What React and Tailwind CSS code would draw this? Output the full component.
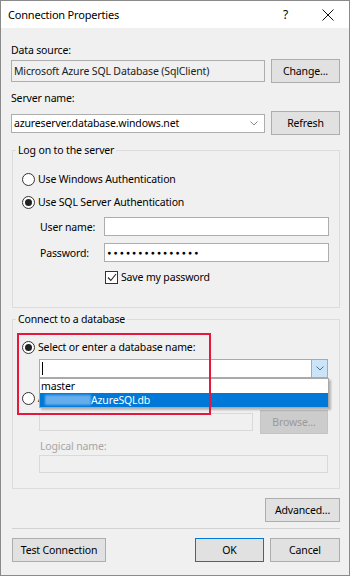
import React from "react";

const Radio = ({ checked }) => (
  <span className="w-[13px] h-[13px] shrink-0 rounded-full border border-[#333] bg-white flex items-center justify-center">
    {checked && <span className="w-[7px] h-[7px] rounded-full bg-[#222]" />}
  </span>
);

const Btn = ({ children, className = "", disabled, primary }) => (
  <div
    className={`h-[24px] shrink-0 flex items-center justify-center border ${
      primary ? "border-[#0078d7]" : disabled ? "border-[#c4c4c4]" : "border-[#adadad]"
    } ${disabled ? "bg-[#cccccc] text-[#9a9a9a]" : "bg-[#e1e1e1] text-black"} ${className}`}
  >
    {children}
  </div>
);

const Chevron = ({ color = "#606060" }) => (
  <svg width="8" height="5" viewBox="0 0 8 5">
    <polyline points="0.5,0.5 4,4 7.5,0.5" fill="none" stroke={color} strokeWidth="1" />
  </svg>
);

export default function App() {
  const dots = Array.from({ length: 15 });
  return (
    <div className="w-[350px] h-[576px] border border-[#8a8a8a] bg-[#f0f0f0] flex flex-col text-[10.5px] tracking-[-0.15px] leading-[16px] text-black font-['Noto_Sans',sans-serif] overflow-hidden whitespace-nowrap">
      {/* Title bar */}
      <div className="h-[27px] bg-white flex items-center pl-[7px] shrink-0">
        <span className="text-[11px] tracking-[-0.2px]">Connection Properties</span>
        <span className="ml-auto mr-[34px] text-[12px]">?</span>
        <svg width="12" height="12" viewBox="0 0 12 12" className="mr-[15px]">
          <path d="M0.5 0.5 L11.5 11.5 M11.5 0.5 L0.5 11.5" stroke="#111" strokeWidth="1" />
        </svg>
      </div>

      {/* Body */}
      <div className="flex flex-col pl-[10px] pr-[9px]">
        <div className="mt-[14px]">Data source:</div>
        <div className="mt-[1px] h-[24px] flex items-center gap-[6px]">
          <div className="w-[254px] h-[22px] border border-[#adadad] bg-[#f0f0f0] flex items-center pl-[2px] text-[#222]">
            Microsoft Azure SQL Database (SqlClient)
          </div>
          <Btn className="w-[69px]">Change...</Btn>
        </div>

        <div className="mt-[7px]">Server name:</div>
        <div className="mt-[5px] h-[24px] flex items-center gap-[6px]">
          <div className="w-[254px] h-[19px] border border-[#adadad] bg-white flex items-center pl-[2px] pr-[6px]">
            <span>azureserver.database.windows.net</span>
            <span className="ml-auto">
              <Chevron color="#8a8a8a" />
            </span>
          </div>
          <Btn className="w-[69px]">Refresh</Btn>
        </div>

        {/* Log on to the server */}
        <fieldset className="mt-[8px] ml-[1px] w-[328px] h-[165px] border border-[#dcdcdc]">
          <legend className="ml-[3px] px-[2px] leading-[14px]">Log on to the server</legend>
          <div className="flex flex-col pl-[9px]">
            <div className="mt-[14px] h-[16px] flex items-center gap-[3px]">
              <Radio />
              <span>Use Windows Authentication</span>
            </div>
            <div className="mt-[7px] h-[16px] flex items-center gap-[3px]">
              <Radio checked />
              <span>Use SQL Server Authentication</span>
            </div>
            <div className="mt-[7px] h-[19px] flex items-center pl-[18px]">
              <span className="w-[64px] shrink-0">User name:</span>
              <div className="w-[225px] h-[19px] border border-[#adadad] bg-white" />
            </div>
            <div className="mt-[7px] h-[19px] flex items-center pl-[18px]">
              <span className="w-[64px] shrink-0">Password:</span>
              <div className="w-[225px] h-[19px] border border-[#adadad] bg-white flex items-center pl-[2px]">
                <div className="w-[92px] flex justify-between text-[6.5px] leading-[8px] tracking-normal">
                  {dots.map((_, i) => (
                    <span key={i} className="w-[5px] flex justify-center">●</span>
                  ))}
                </div>
              </div>
            </div>
            <div className="mt-[7px] h-[16px] flex items-center gap-[3px] pl-[83px]">
              <span className="w-[13px] h-[13px] border border-[#333] bg-white flex items-center justify-center">
                <svg width="10" height="9" viewBox="0 0 10 9">
                  <polyline points="1,4.5 3.8,7.5 9,1" fill="none" stroke="#222" strokeWidth="1.1" />
                </svg>
              </span>
              <span>Save my password</span>
            </div>
          </div>
        </fieldset>

        {/* Connect to a database */}
        <div className="relative mt-[4px] ml-[1px] w-[328px]">
          <fieldset className="w-[328px] h-[177px] border border-[#dcdcdc]">
            <legend className="ml-[3px] px-[2px] leading-[14px]">Connect to a database</legend>
            <div className="flex flex-col pl-[9px]">
              <div className="mt-[13px] h-[16px] flex items-center gap-[3px]">
                <Radio checked />
                <span>Select or enter a database name:</span>
              </div>
              <div className="relative mt-[4px] ml-[17px] w-[289px] h-[19px] border border-[#7eb4ea] bg-white flex items-center">
                <span className="ml-[2px] w-px h-[13px] bg-black" />
                <span className="ml-auto w-[16px] h-full bg-[#cce4f7] border-l border-[#7eb4ea] flex items-center justify-center">
                  <Chevron color="#4a6b8a" />
                </span>
                {/* dropdown list */}
                <div className="absolute left-[-1px] top-[18px] w-[290px] h-[30px] border border-[#a9a9a9] bg-white flex flex-col z-10 shadow-[2px_2px_2px_rgba(0,0,0,0.25)]">
                  <div className="h-[14px] flex items-center pl-[1px] leading-[14px]">master</div>
                  <div className="h-[14px] flex items-center bg-[#0078d7] text-white leading-[14px]">
                    <span className="ml-[5px] w-[46px] h-[10px] bg-[#66adee] blur-[1px]" />
                    <span>AzureSQLdb</span>
                  </div>
                </div>
              </div>
              <div className="mt-[12px] h-[16px] flex items-center gap-[3px]">
                <Radio />
                <span>Attach a database file:</span>
              </div>
              <div className="mt-[4px] ml-[17px] h-[23px] flex items-center gap-[7px]">
                <div className="w-[214px] h-[18px] border border-[#d9d9d9] bg-[#f0f0f0]" />
                <Btn disabled className="w-[68px] h-[23px]">Browse...</Btn>
              </div>
              <div className="mt-[5px] ml-[18px] text-[#a6a6a6]">Logical name:</div>
              <div className="mt-[1px] ml-[17px] w-[289px] h-[18px] border border-[#d9d9d9] bg-[#f0f0f0]" />
            </div>
          </fieldset>
          {/* annotation */}
          <div className="absolute left-[5px] top-[21px] w-[194px] h-[82px] border-2 border-[#e5173f] z-20 pointer-events-none" />
        </div>

        <div className="mt-[9px] flex justify-end">
          <Btn className="w-[75px]">Advanced...</Btn>
        </div>
        <div className="mt-[6px] ml-[1px] h-px bg-[#d2d2d2]" />
        <div className="mt-[9px] ml-[1px] flex items-center gap-[6px]">
          <Btn className="w-[94px]">Test Connection</Btn>
          <Btn primary className="w-[69px] ml-auto">OK</Btn>
          <Btn className="w-[70px]">Cancel</Btn>
        </div>
      </div>
    </div>
  );
}
